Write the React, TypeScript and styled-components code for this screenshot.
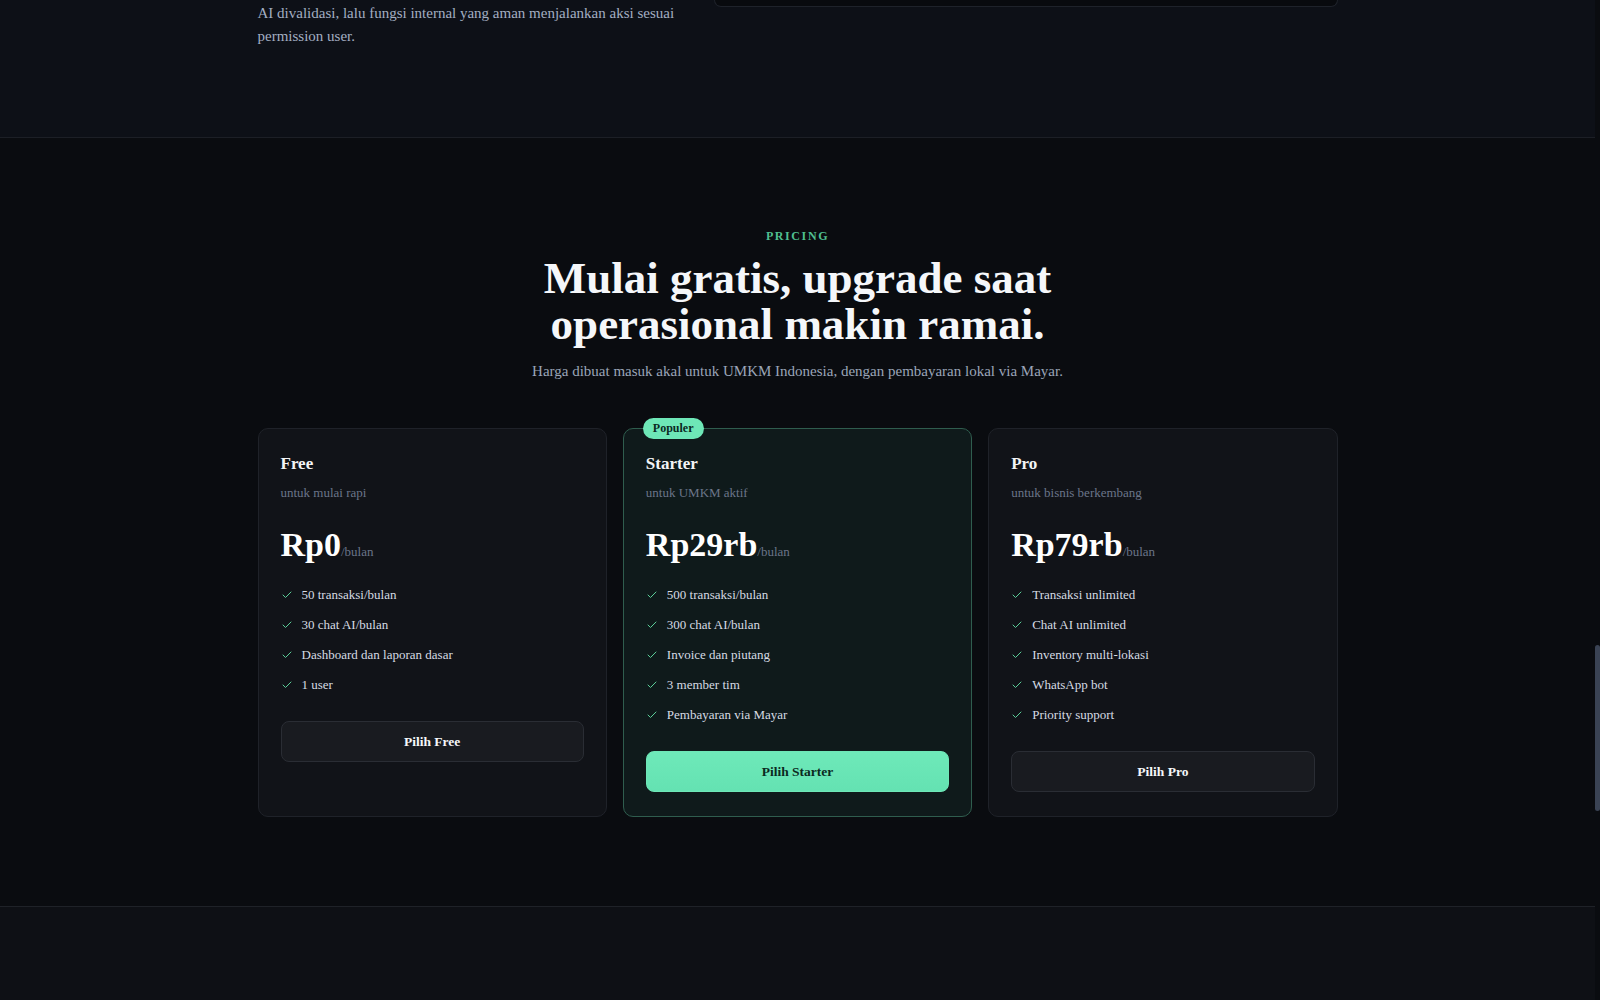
import React from 'react';
import styled, { createGlobalStyle } from 'styled-components';
import { Check } from 'lucide-react';

const GlobalStyle = createGlobalStyle`
    html, body {
        margin: 0;
        padding: 0;
        background: #0a0c10;
        overflow: hidden;
    }
    * {
        box-sizing: border-box;
    }
    body {
        font-family: "Liberation Serif", "Times New Roman", serif;
        -webkit-font-smoothing: antialiased;
    }
`;

type Plan = {
    name: string;
    tagline: string;
    price: string;
    features: string[];
    cta: string;
    featured?: boolean;
};

const PLANS: Plan[] = [
    {
        name: 'Free',
        tagline: 'untuk mulai rapi',
        price: 'Rp0',
        features: ['50 transaksi/bulan', '30 chat AI/bulan', 'Dashboard dan laporan dasar', '1 user'],
        cta: 'Pilih Free',
    },
    {
        name: 'Starter',
        tagline: 'untuk UMKM aktif',
        price: 'Rp29rb',
        features: ['500 transaksi/bulan', '300 chat AI/bulan', 'Invoice dan piutang', '3 member tim', 'Pembayaran via Mayar'],
        cta: 'Pilih Starter',
        featured: true,
    },
    {
        name: 'Pro',
        tagline: 'untuk bisnis berkembang',
        price: 'Rp79rb',
        features: ['Transaksi unlimited', 'Chat AI unlimited', 'Inventory multi-lokasi', 'WhatsApp bot', 'Priority support'],
        cta: 'Pilih Pro',
    },
];

const PlanCard = ({ plan }: { plan: Plan }) => (
    <Card featured={plan.featured}>
        {plan.featured && <Badge>Populer</Badge>}
        <PlanName>{plan.name}</PlanName>
        <Tagline>{plan.tagline}</Tagline>
        <PriceRow>
            <Price>{plan.price}</Price>
            <Period>/bulan</Period>
        </PriceRow>
        <FeatureList>
            {plan.features.map((f) => (
                <Feature key={f}>
                    <Check size={12} strokeWidth={2} color="#5ccf9a" />
                    <span>{f}</span>
                </Feature>
            ))}
        </FeatureList>
        <ChooseButton primary={plan.featured}>{plan.cta}</ChooseButton>
    </Card>
);

export default function App() {
    return (
        <Page>
            <GlobalStyle />
            <HowSection>
                <Container>
                    <HowGrid>
                        <HowText>
                            AI divalidasi, lalu fungsi internal yang aman menjalankan aksi sesuai permission user.
                        </HowText>
                        <FlowCardTail />
                    </HowGrid>
                </Container>
            </HowSection>

            <PricingSection>
                <Container>
                    <Eyebrow>PRICING</Eyebrow>
                    <Heading>Mulai gratis, upgrade saat operasional makin ramai.</Heading>
                    <Lead>Harga dibuat masuk akal untuk UMKM Indonesia, dengan pembayaran lokal via Mayar.</Lead>
                    <PlanGrid>
                        {PLANS.map((p) => (
                            <PlanCard key={p.name} plan={p} />
                        ))}
                    </PlanGrid>
                </Container>
            </PricingSection>

            <NextSection />
            <ScrollThumb />
        </Page>
    );
}

const Page = styled.div`
    width: 1595px;
    height: 1000px;
    overflow: hidden;
`;

const Container = styled.div`
    width: 1080px;
    margin: 0 auto;
`;

const HowSection = styled.section`
    background: #0d1017;
    padding-bottom: 90px;
`;

const HowGrid = styled.div`
    display: grid;
    grid-template-columns: 424px 1fr;
    gap: 32px;
    align-items: start;
`;

const HowText = styled.p`
    margin: 2px 0 0;
    font-size: 15px;
    line-height: 22.5px;
    color: #a3aec2;
`;

const FlowCardTail = styled.div`
    height: 7px;
    background: #080a0e;
    border: 1px solid #1e222a;
    border-top: none;
    border-radius: 0 0 10px 10px;
`;

const PricingSection = styled.section`
    background: #0a0c10;
    border-top: 1px solid #1c1f26;
    padding: 89px 0 89px;
    text-align: center;
`;

const Eyebrow = styled.div`
    font-size: 12px;
    line-height: 18px;
    font-weight: 700;
    letter-spacing: 1.6px;
    color: #4fbf8f;
`;

const Heading = styled.h2`
    margin: 10px auto 0;
    max-width: 600px;
    font-size: 45px;
    line-height: 46px;
    font-weight: 700;
    color: #f5f7fa;
`;

const Lead = styled.p`
    margin: 12px 0 0;
    font-size: 15px;
    line-height: 24px;
    color: #9aa5b8;
`;

const PlanGrid = styled.div`
    margin-top: 45px;
    display: grid;
    grid-template-columns: repeat(3, 1fr);
    gap: 16px;
    text-align: left;
`;

const Card = styled.div<{ featured?: boolean }>`
    position: relative;
    display: flex;
    flex-direction: column;
    padding: 24px 22px;
    border-radius: 10px;
    border: 1px solid ${(p) => (p.featured ? '#2f5d4e' : '#1f2229')};
    background: ${(p) => (p.featured ? '#0f1a1b' : '#111318')};
`;

const Badge = styled.span`
    position: absolute;
    top: -11px;
    left: 19px;
    height: 21px;
    padding: 0 10px;
    border-radius: 999px;
    background: #6ee7b7;
    color: #0b2a1f;
    font-size: 12px;
    font-weight: 700;
    line-height: 21px;
`;

const PlanName = styled.h3`
    margin: 0;
    font-size: 17px;
    line-height: 22px;
    font-weight: 700;
    color: #f3f4f6;
`;

const Tagline = styled.div`
    margin-top: 8px;
    font-size: 13px;
    line-height: 20px;
    color: #6b7589;
`;

const PriceRow = styled.div`
    margin-top: 24px;
    display: flex;
    align-items: baseline;
`;

const Price = styled.span`
    font-size: 34px;
    line-height: 35px;
    font-weight: 700;
    color: #ffffff;
`;

const Period = styled.span`
    font-size: 13px;
    color: #6b7589;
`;

const FeatureList = styled.ul`
    list-style: none;
    margin: 23px 0 0;
    padding: 0;
    display: flex;
    flex-direction: column;
    gap: 10px;
`;

const Feature = styled.li`
    display: flex;
    align-items: center;
    gap: 9px;
    font-size: 13px;
    line-height: 20px;
    color: #d6dbe3;

    svg {
        flex-shrink: 0;
    }
`;

const ChooseButton = styled.button<{ primary?: boolean }>`
    margin-top: 26px;
    height: 41px;
    width: 100%;
    border-radius: 8px;
    font-family: inherit;
    font-size: 13.5px;
    font-weight: 700;
    cursor: pointer;
    border: 1px solid ${(p) => (p.primary ? '#6ee7b7' : '#2a2d34')};
    background: ${(p) => (p.primary ? 'linear-gradient(180deg, #6ee9b9, #64e2b2)' : '#191b20')};
    color: ${(p) => (p.primary ? '#0c2a1f' : '#f5f7fa')};
`;

const NextSection = styled.section`
    height: 200px;
    background: #0e1015;
    border-top: 1px solid #1f2228;
`;

const ScrollThumb = styled.div`
    position: fixed;
    right: 0;
    top: 645px;
    width: 5px;
    height: 166px;
    border-radius: 3px;
    background: #3a4354;
`;
